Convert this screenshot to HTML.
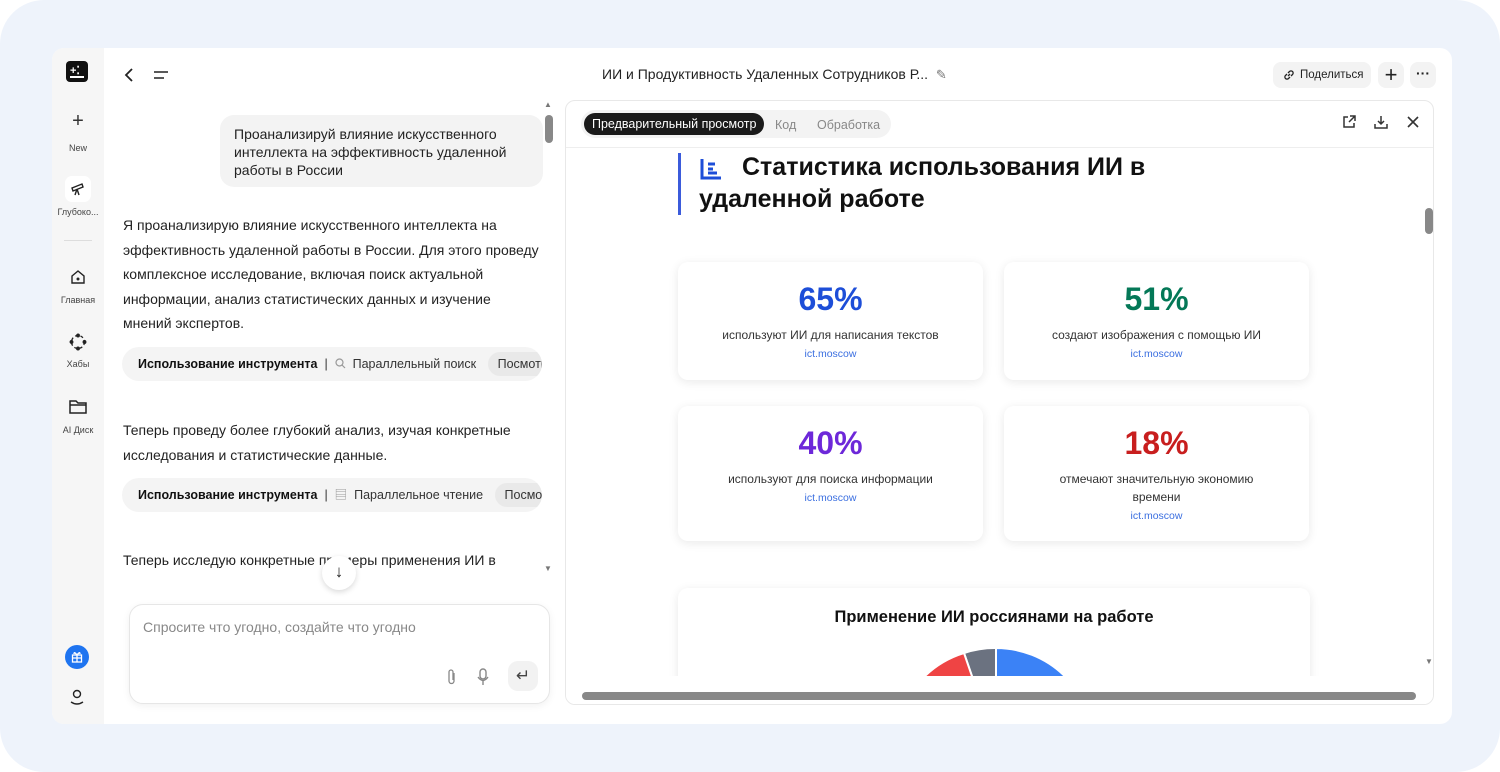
<!DOCTYPE html>
<html><head><meta charset="utf-8"><style>
*{box-sizing:border-box;margin:0;padding:0}
body{width:1500px;height:772px;background:#fff;font-family:"Liberation Sans","Noto Sans CJK SC",sans-serif;color:#222;position:relative;overflow:hidden}
.bg{position:absolute;left:0;top:0;width:1500px;height:772px;background:#eef3fb;border-radius:44px}
.card{position:absolute;left:52px;top:48px;width:1400px;height:676px;background:#fff;border-radius:12px;overflow:hidden}
.side{position:absolute;left:0;top:0;width:52px;height:676px;background:#f6f6f6}
.abs{position:absolute}
.sl{position:absolute;width:52px;text-align:center;font-size:9px;color:#444}
.msg{font-size:14px;line-height:24.5px;color:#222}
.tool{position:absolute;left:70px;width:420px;height:34px;background:#f4f4f4;border-radius:17px;font-size:12.5px;line-height:34px;padding-left:16px;white-space:nowrap;overflow:hidden;color:#333}
.tool b{color:#111}
.pill{display:inline-block;background:#e9e9e9;border-radius:12px;padding:0 10px;line-height:24px;margin-left:8px}
.stat{position:absolute;width:305px;background:#fff;border-radius:10px;box-shadow:0 2px 10px rgba(0,0,0,.09);text-align:center}
.stat .n{font-size:32px;font-weight:bold;margin-top:18px;line-height:38px}
.stat .d{font-size:12px;color:#333;margin-top:8px;line-height:18px}
.stat .s{font-size:10.5px;color:#3b6fe0;margin-top:4px}
</style></head><body>
<div class="bg"></div>
<div class="card">
 <div class="side">
  <div class="abs" style="left:14px;top:13px;width:22px;height:21px;background:#111;border-radius:4px"><div class="abs" style="left:4px;top:15px;width:14px;height:2px;background:#fff"></div><div class="abs" style="left:4px;top:3px;color:#fff;font-size:11px;font-weight:bold">+⁚</div></div>
  <div class="sl" style="top:62px;font-size:20px;color:#333">+</div>
  <div class="sl" style="top:95px">New</div>
  <div class="abs" style="left:13px;top:128px;width:26px;height:26px;background:#fff;border-radius:7px"></div>
  <svg class="abs" style="left:18px;top:133px" width="16" height="16" viewBox="0 0 16 16" fill="none" stroke="#222" stroke-width="1.4"><path d="M2 7 L12 3 L13 6 L3 10 Z M7 8 L5 14 M7 8 L9 14"/></svg>
  <div class="sl" style="top:159px">Глубоко...</div>
  <div class="abs" style="left:12px;top:192px;width:28px;height:1px;background:#ddd"></div>
  <svg class="abs" style="left:17px;top:220px" width="18" height="18" viewBox="0 0 18 18" fill="none" stroke="#222" stroke-width="1.4"><path d="M3 8 L9 3 L15 8 V15 H3 Z"/><circle cx="9" cy="11" r=".8" fill="#222"/></svg>
  <div class="sl" style="top:247px">Главная</div>
  <svg class="abs" style="left:16px;top:284px" width="20" height="20" viewBox="0 0 20 20" fill="none" stroke="#222" stroke-width="1.3"><circle cx="10" cy="10" r="6.5" stroke-dasharray="3 2.5"/><circle cx="10" cy="3.5" r="1.3" fill="#222"/><circle cx="16.5" cy="10" r="1.3" fill="#222"/><circle cx="10" cy="16.5" r="1.3" fill="#222"/><circle cx="3.5" cy="10" r="1.3" fill="#222"/></svg>
  <div class="sl" style="top:311px">Хабы</div>
  <svg class="abs" style="left:16px;top:350px" width="20" height="18" viewBox="0 0 20 18" fill="none" stroke="#222" stroke-width="1.5"><path d="M2 3 H8 L10 5 H18 V15 H2 Z"/><path d="M2 7 H18"/></svg>
  <div class="sl" style="top:377px">AI Диск</div>
  <div class="abs" style="left:13px;top:597px;width:24px;height:24px;background:#1e74f0;border-radius:12px"></div>
  <svg class="abs" style="left:19px;top:603px" width="12" height="12" viewBox="0 0 12 12" fill="none" stroke="#fff" stroke-width="1.3"><rect x="1.5" y="4" width="9" height="7"/><path d="M1.5 7 H10.5 M6 4 V11 M6 4 Q3 0 3 3 M6 4 Q9 0 9 3"/></svg>
  <svg class="abs" style="left:16px;top:640px" width="18" height="18" viewBox="0 0 18 18" fill="none" stroke="#222" stroke-width="1.4"><circle cx="9" cy="6" r="3.5"/><path d="M3 14 Q9 18 15 14"/></svg>
 </div>
 <svg class="abs" style="left:70px;top:18px" width="14" height="18" viewBox="0 0 14 18" fill="none" stroke="#222" stroke-width="1.8"><path d="M10 3 L4 9 L10 15"/></svg>
 <svg class="abs" style="left:100px;top:20px" width="18" height="14" viewBox="0 0 18 14" stroke="#222" stroke-width="1.6"><path d="M2 4 H16 M2 10 H12"/></svg>
 <div class="abs" style="left:550px;top:18px;font-size:14px;color:#222">ИИ и Продуктивность Удаленных Сотрудников Р...&nbsp; <span style="color:#777;font-size:13px">✎</span></div>
 <div class="abs" style="left:1221px;top:14px;width:98px;height:26px;background:#f3f3f3;border-radius:8px;font-size:11.5px;line-height:26px;padding-left:27px;color:#222">Поделиться</div>
 <svg class="abs" style="left:1231px;top:21px" width="12" height="12" viewBox="0 0 12 12" fill="none" stroke="#222" stroke-width="1.3"><path d="M5 7 L7 5 M4 5 L2.5 6.5 A2 2 0 0 0 5.5 9.5 L7 8 M8 7 L9.5 5.5 A2 2 0 0 0 6.5 2.5 L5 4"/></svg>
 <div class="abs" style="left:1326px;top:14px;width:26px;height:26px;background:#f3f3f3;border-radius:8px;font-size:22px;line-height:25px;text-align:center">+</div>
 <div class="abs" style="left:1358px;top:14px;width:26px;height:26px;background:#f3f3f3;border-radius:8px;font-size:14px;line-height:22px;text-align:center;font-weight:bold">···</div>
 <div class="abs" style="left:168px;top:67px;width:323px;height:72px;background:#f3f3f3;border-radius:14px;padding:10px 14px;font-size:14px;line-height:18px;color:#222">Проанализируй влияние искусственного интеллекта на эффективность удаленной работы в России</div>
 <div class="abs" style="left:492px;top:52px;width:8px;height:10px;color:#777;font-size:8px">▲</div>
 <div class="abs" style="left:493px;top:67px;width:8px;height:28px;background:#888;border-radius:4px"></div>
 <div class="abs" style="left:492px;top:516px;color:#777;font-size:8px">▼</div>
 <div class="abs msg" style="left:71px;top:165px;width:420px">Я проанализирую влияние искусственного интеллекта на эффективность удаленной работы в России. Для этого проведу комплексное исследование, включая поиск актуальной информации, анализ статистических данных и изучение мнений экспертов.</div>
 <div class="tool" style="top:299px"><b>Использование инструмента</b> &nbsp;| &nbsp;<svg width="11" height="11" viewBox="0 0 11 11" fill="none" stroke="#999" stroke-width="1.2" style="vertical-align:-1px"><circle cx="4.5" cy="4.5" r="3.5"/><path d="M7 7 L10 10"/></svg>&nbsp; Параллельный поиск <span class="pill">Посмотреть</span></div>
 <div class="abs msg" style="left:71px;top:370px;width:420px">Теперь проведу более глубокий анализ, изучая конкретные исследования и статистические данные.</div>
 <div class="tool" style="top:430px"><b>Использование инструмента</b> &nbsp;| &nbsp;<span style="color:#999">▤</span>&nbsp; Параллельное чтение <span class="pill">Посмотреть</span></div>
 <div class="abs msg" style="left:71px;top:500px;width:420px">Теперь исследую конкретные примеры применения ИИ в</div>
 <div class="abs" style="left:270px;top:508px;width:34px;height:34px;background:#fff;border-radius:17px;box-shadow:0 2px 6px rgba(0,0,0,.15);text-align:center;font-size:17px;line-height:32px">↓</div>
 <div class="abs" style="left:77px;top:556px;width:421px;height:100px;border:1px solid #e6e6e6;border-radius:14px;box-shadow:0 2px 8px rgba(0,0,0,.06);background:#fff">
  <div class="abs" style="left:13px;top:14px;font-size:14px;color:#888">Спросите что угодно, создайте что угодно</div>
  <svg class="abs" style="left:316px;top:63px" width="12" height="18" viewBox="0 0 12 18" fill="none" stroke="#888" stroke-width="1.3"><path d="M8 5 V13 A2.5 2.5 0 0 1 3 13 V4 A2 2 0 0 1 7 4 V12"/></svg>
  <svg class="abs" style="left:346px;top:63px" width="14" height="18" viewBox="0 0 14 18" fill="none" stroke="#888" stroke-width="1.4"><rect x="4" y="1" width="6" height="10" rx="3"/><path d="M2 9 Q7 16 12 9 M7 13 V17"/></svg>
  <div class="abs" style="left:378px;top:56px;width:30px;height:30px;background:#f2f2f2;border-radius:10px;text-align:center;font-size:17px;line-height:30px;color:#444">↵</div>
 </div>
 <div class="abs" style="left:513px;top:52px;width:869px;height:605px;border:1px solid #e8e8e8;border-radius:10px;overflow:hidden;background:#fff">
  <div class="abs" style="left:15px;top:9px;width:310px;height:28px;background:#f3f3f3;border-radius:14px"></div>
  <div class="abs" style="left:18px;top:12px;height:22px;background:#1a1a1a;color:#fff;border-radius:11px;font-size:12.5px;line-height:22px;padding:0 8px">Предварительный просмотр</div>
  <div class="abs" style="left:209px;top:17px;font-size:12.5px;color:#888">Код</div>
  <div class="abs" style="left:251px;top:17px;font-size:12.5px;color:#888">Обработка</div>
  <svg class="abs" style="left:775px;top:13px" width="16" height="16" viewBox="0 0 16 16" fill="none" stroke="#333" stroke-width="1.5"><path d="M7 3 H3 V13 H13 V9 M9 2 H14 V7 M14 2 L8 8"/></svg>
  <svg class="abs" style="left:807px;top:13px" width="16" height="16" viewBox="0 0 16 16" fill="none" stroke="#333" stroke-width="1.5"><path d="M8 2 V10 M5 7 L8 10 L11 7 M2 10 V14 H14 V10"/></svg>
  <svg class="abs" style="left:839px;top:13px" width="16" height="16" viewBox="0 0 16 16" stroke="#333" stroke-width="1.6"><path d="M3 3 L13 13 M13 3 L3 13"/></svg>
  <div class="abs" style="left:0;top:46px;width:869px;height:1px;background:#eee"></div>
  <div class="abs" style="left:112px;top:52px;width:3px;height:62px;background:#3b5bdb"></div>
  <svg class="abs" style="left:133px;top:57px" width="24" height="22" viewBox="0 0 24 22" stroke="#1d4ed8" stroke-width="3" fill="none"><path d="M3 1 V20 H22 M9 6 H16 M9 11 H14 M9 15 H18"/></svg>
  <div class="abs" style="left:133px;top:50px;width:700px;font-size:25px;font-weight:bold;line-height:32px;color:#111"><span style="margin-left:43px"></span>Статистика использования ИИ в<br>удаленной работе</div>
  <div class="stat" style="left:112px;top:161px;height:118px"><div class="n" style="color:#1d4ed8">65%</div><div class="d">используют ИИ для написания текстов</div><div class="s">ict.moscow</div></div>
  <div class="stat" style="left:438px;top:161px;height:118px"><div class="n" style="color:#047857">51%</div><div class="d">создают изображения с помощью ИИ</div><div class="s">ict.moscow</div></div>
  <div class="stat" style="left:112px;top:305px;height:135px"><div class="n" style="color:#6d28d9">40%</div><div class="d">используют для поиска информации</div><div class="s">ict.moscow</div></div>
  <div class="stat" style="left:438px;top:305px;height:135px"><div class="n" style="color:#c81e1e">18%</div><div class="d">отмечают значительную экономию<br>времени</div><div class="s">ict.moscow</div></div>
  <div class="stat" style="left:112px;top:487px;width:632px;height:120px;border-radius:10px 10px 0 0"><div style="font-size:16.5px;font-weight:bold;color:#111;margin-top:20px">Применение ИИ россиянами на работе</div></div>
  <svg class="abs" style="left:330px;top:545px" width="200" height="30" viewBox="0 0 200 30">
   <path d="M100 100 L100 2 A98 98 0 0 1 198 100 Z" fill="#3b82f6" stroke="#fff" stroke-width="2"/>
   <path d="M100 100 L68 7 A98 98 0 0 1 100 2 Z" fill="#6b7280" stroke="#fff" stroke-width="2"/>
   <path d="M100 100 L20 40 A98 98 0 0 1 68 7 Z" fill="#ef4444" stroke="#fff" stroke-width="2"/>
  </svg>
  <div class="abs" style="left:0;top:575px;width:869px;height:30px;background:#fff"></div>
  <div class="abs" style="left:16px;top:591px;width:834px;height:8px;background:#888;border-radius:4px"></div>
  <div class="abs" style="left:859px;top:107px;width:8px;height:26px;background:#888;border-radius:4px"></div>
  <div class="abs" style="left:859px;top:556px;color:#777;font-size:8px">▼</div>
 </div>
</div>
</body></html>
